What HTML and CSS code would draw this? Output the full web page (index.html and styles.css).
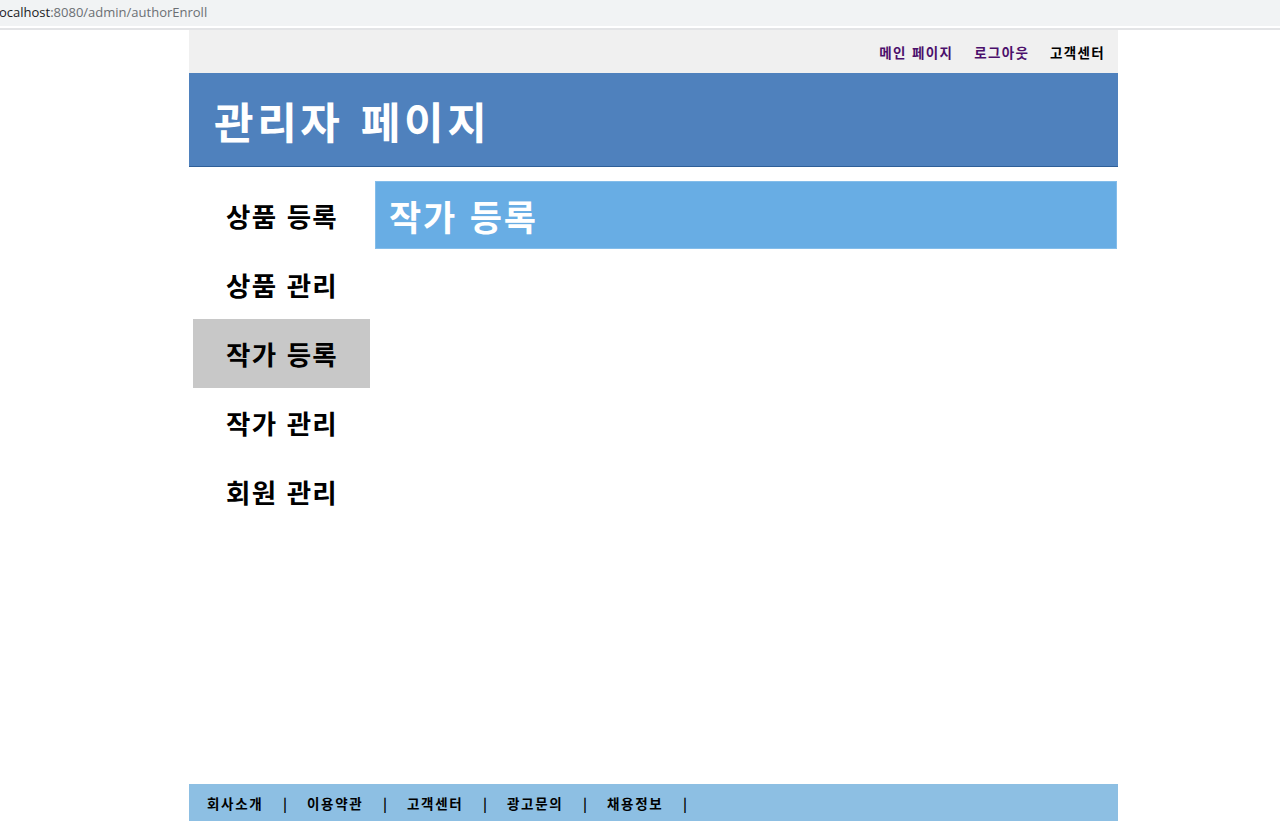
FILE: index.html
```html
<!DOCTYPE html>
<html>
<head>
    <title>관리자 페이지</title>
    <link rel="stylesheet" href="styles.css">
</head>
<body>
    <div class="urlbar"><span class="host">ocalhost</span>:8080/admin/authorEnroll</div>
    <div class="wrapper">
        <div class="top_nav">
            <a href="#" class="visited">메인 페이지</a>
            <a href="#" class="visited">로그아웃</a>
            <a href="#">고객센터</a>
        </div>
        <div class="admin_top">
            <h1>관리자 페이지</h1>
        </div>
        <div class="admin_wrap">
            <ul class="admin_navi">
                <li><a href="#">상품 등록</a></li>
                <li><a href="#">상품 관리</a></li>
                <li class="active"><a href="#">작가 등록</a></li>
                <li><a href="#">작가 관리</a></li>
                <li><a href="#">회원 관리</a></li>
            </ul>
            <div class="admin_content">
                <div class="content_title">작가 등록</div>
            </div>
        </div>
    </div>
    <div class="footer">
        <a href="#">회사소개</a><span class="bar">|</span>
        <a href="#">이용약관</a><span class="bar">|</span>
        <a href="#">고객센터</a><span class="bar">|</span>
        <a href="#">광고문의</a><span class="bar">|</span>
        <a href="#">채용정보</a><span class="bar">|</span>
    </div>
</body>
</html>
```

FILE: styles.css
```css
* {
    box-sizing: border-box;
}
body {
    margin: 0;
    font-family: "Noto Sans CJK KR", "Noto Sans", sans-serif;
    background-color: white;
    height: 821px;
    overflow: hidden;
    display: flex;
    flex-direction: column;
}
a {
    text-decoration: none;
    color: black;
}
.urlbar {
    height: 30px;
    flex-shrink: 0;
    background-color: #f1f3f4;
    border-bottom: 2px solid #e3e4e6;
    box-shadow: inset 0 -2px 0 white;
    padding: 4px 0 0 0;
    margin-left: -1px;
    font-family: "Open Sans", "Noto Sans", sans-serif;
    font-size: 13px;
    color: #6b6f73;
    line-height: 17px;
}
.urlbar .host {
    color: #202124;
}
.wrapper {
    width: 929px;
    margin-left: 189px;
    flex: 1;
}
.top_nav {
    height: 43px;
    background-color: #f0f0f0;
    display: flex;
    justify-content: flex-end;
    align-items: center;
    gap: 21px;
    padding: 0 13px 0 0;
}
.top_nav a {
    font-size: 13.5px;
    font-weight: bold;
    letter-spacing: 1.3px;
    word-spacing: 1px;
}
.top_nav a.visited {
    color: #4b0f6b;
}
.admin_top {
    height: 94px;
    background-color: #4f81bd;
    border-bottom: 1px solid #2f5f98;
    padding-left: 25px;
    display: flex;
    align-items: center;
}
.admin_top h1 {
    margin: 0;
    color: white;
    font-size: 43px;
    font-weight: bold;
    letter-spacing: 3.6px;
    word-spacing: 4px;
}
.admin_wrap {
    display: flex;
    margin-top: 14px;
    gap: 5px;
}
.admin_navi {
    list-style: none;
    margin: 0 0 0 4px;
    padding: 0;
    width: 177px;
}
.admin_navi li {
    height: 69px;
    display: flex;
    align-items: center;
    padding-left: 33px;
}
.admin_navi li a {
    font-size: 26.5px;
    font-weight: bold;
    letter-spacing: 1.3px;
    word-spacing: 2px;
}
.admin_navi li.active {
    background-color: #c8c8c8;
}
.admin_content {
    flex: 1;
    margin-right: 1px;
}
.content_title {
    height: 68px;
    background-color: #68ade4;
    border: 1px solid #84bdea;
    color: white;
    font-size: 35px;
    font-weight: bold;
    letter-spacing: 1.8px;
    word-spacing: 3px;
    padding-left: 13px;
    display: flex;
    align-items: center;
}
.footer {
    width: 929px;
    margin-left: 189px;
    height: 37px;
    flex-shrink: 0;
    background-color: #8dbfe3;
    display: flex;
    align-items: center;
    padding-left: 18px;
    font-size: 13.5px;
    font-weight: bold;
}
.footer a {
    letter-spacing: 1.7px;
}
.footer .bar {
    margin: 0 20px 0 19.5px;
}
```
